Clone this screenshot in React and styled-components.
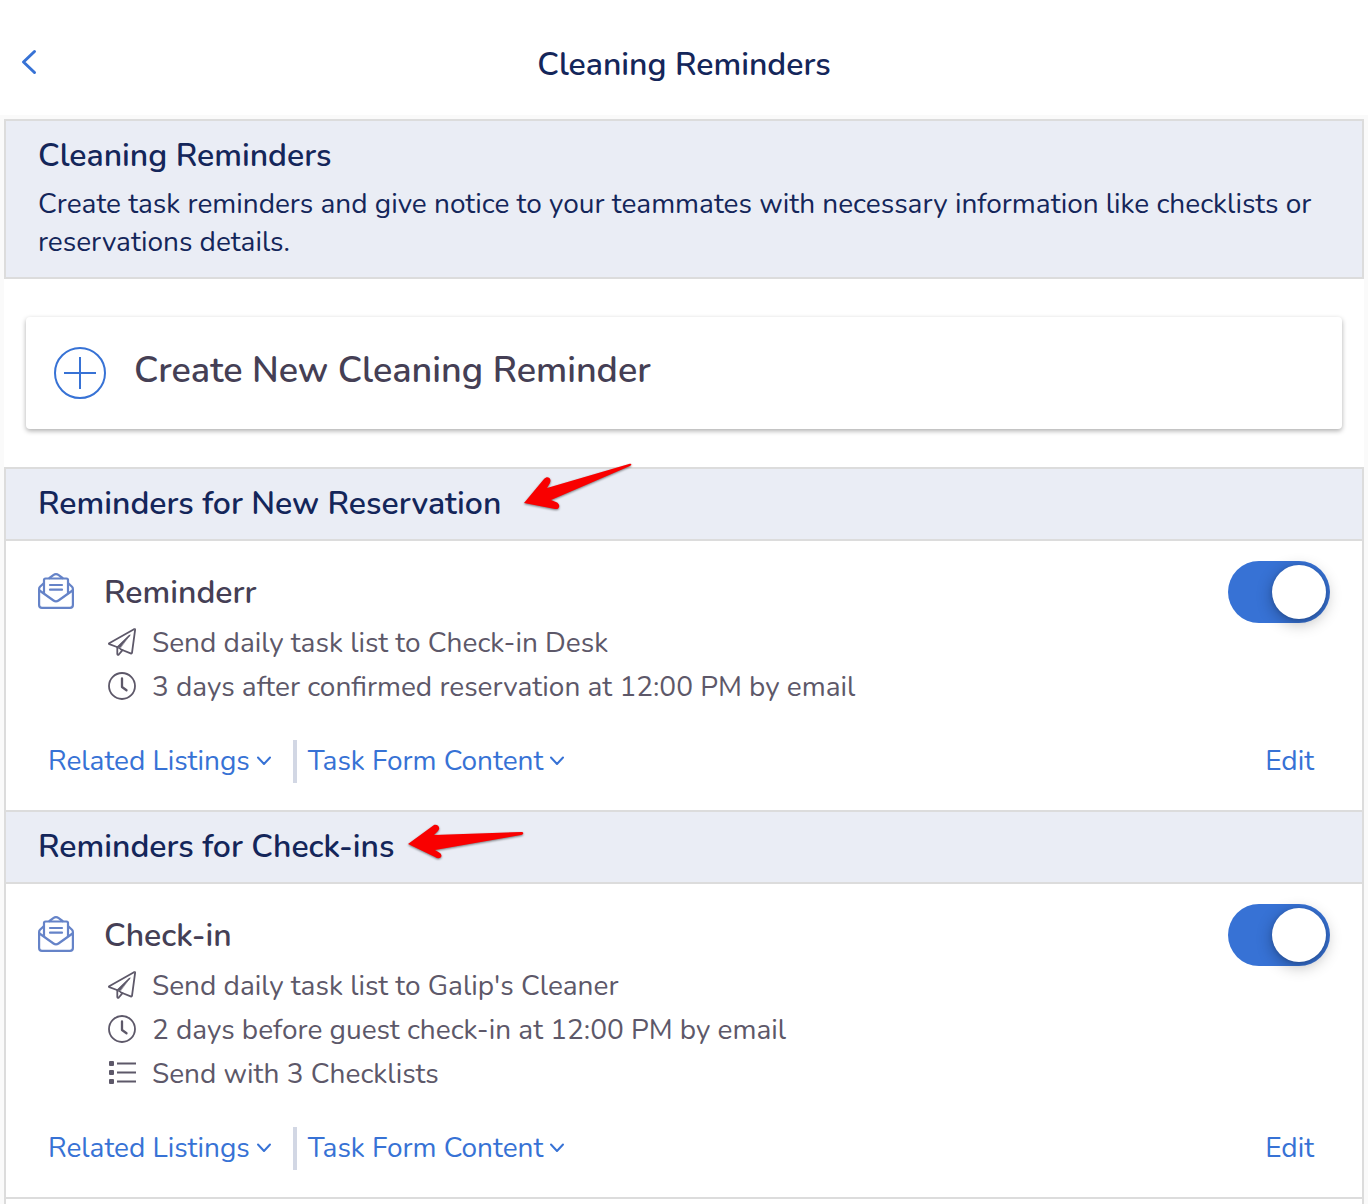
import { useState } from "react";
import styled, { createGlobalStyle } from "styled-components";

const GlobalStyle = createGlobalStyle`
  * {
    box-sizing: border-box;
  }
  body {
    margin: 0;
    background: #fafafa;
    color: #453f55;
    font-family: Nunito, Lato, "Open Sans", sans-serif;
    font-size: 28px;
  }
  button {
    font: inherit;
    border: none;
    padding: 0;
    cursor: pointer;
  }
  h1, h2, h3, p, ul {
    margin: 0;
    padding: 0;
    font-weight: 600;
  }
`;

const Page = styled.div`
  min-height: 100vh;
  display: flex;
  flex-direction: column;
`;

const TopBar = styled.header`
  display: grid;
  grid-template-columns: 60px 1fr 60px;
  align-items: center;
  height: 115px;
  padding-top: 14px;
  background: #fff;
`;

const BackButton = styled.button`
  display: flex;
  align-items: center;
  height: 44px;
  padding: 0 0 6px 20px;
  background: none;
  color: #3772d5;
`;

const PageTitle = styled.h1`
  color: #14265a;
  font-size: 32px;
  line-height: 44px;
  text-align: center;
`;

const Main = styled.main`
  flex: 1;
  display: flex;
  flex-direction: column;
  margin: 4px 4px 0;
  background: #fff;
`;

const Intro = styled.section`
  padding: 12px 32px 16px;
  background: #eaedf5;
  border: 2px solid #dcdcdc;
  color: #14265a;

  h2 {
    font-size: 32px;
    line-height: 46px;
    margin-bottom: 6px;
  }
  p {
    font-size: 28px;
    font-weight: 400;
    line-height: 38px;
  }
`;

const CreateButton = styled.button`
  display: flex;
  align-items: center;
  gap: 28px;
  height: 112px;
  margin: 38px 22px;
  padding: 0 28px;
  background: #fff;
  border-radius: 4px;
  box-shadow: 0 2px 5px rgba(0, 0, 0, 0.32);
  color: #453f55;
  font-size: 36px;
  font-weight: 600;

  span {
    padding-bottom: 6px;
  }
`;

const List = styled.div`
  flex: 1;
  border: solid #dcdcdc;
  border-width: 0 2px;
`;

const Group = styled.section`
  &:last-child {
    border-bottom: 2px solid #dcdcdc;
  }
`;

const GroupTitle = styled.h2`
  padding: 0 32px;
  background: #eaedf5;
  border: solid #dcdcdc;
  border-width: 2px 0;
  color: #14265a;
  font-size: 32px;
  line-height: 70px;

  span {
    position: relative;
  }
`;

/* pointer drawn over the heading, right after its text */
const Pointer = styled.svg`
  position: absolute;
  left: calc(100% + ${(p) => p.$gap}px);
  top: ${(p) => p.$top}px;
  filter: drop-shadow(0 1px 1px rgba(0, 0, 0, 0.5));
`;

const Item = styled.article`
  padding: 20px 32px 27px;
`;

const ItemHead = styled.div`
  display: grid;
  grid-template-columns: 36px 1fr auto;
  align-items: center;
  column-gap: 30px;

  h3 {
    padding-top: 2px;
    font-size: 32px;
    line-height: 44px;
  }
  > svg {
    margin-bottom: 2px;
  }
`;

const Details = styled.ul`
  padding: 0 0 0 70px;
  margin: -2px 0 31px;
  list-style: none;

  li {
    display: flex;
    align-items: center;
    gap: 16px;
    height: 44px;
    color: #5d5869;
    font-size: 28px;
    font-weight: 400;
  }
  svg {
    flex: none;
    margin-bottom: 2px;
  }
`;

const ItemFooter = styled.footer`
  display: flex;
  align-items: center;
  padding: 0 16px 0 10px;
`;

const LinkButton = styled.button`
  display: flex;
  align-items: center;
  gap: 6px;
  background: none;
  color: #3772d5;
  font-size: 28px;
  line-height: 43px;

  & + & {
    margin-left: 21px;
    padding-left: 11px;
    border-left: 4px solid #d2d7e4;
  }
  svg {
    margin-bottom: 2px;
  }
`;

const EditLink = styled.a`
  margin-left: auto;
  color: #3772d5;
  font-size: 28px;
  line-height: 43px;
  text-decoration: none;
`;

const Switch = styled.input`
  appearance: none;
  width: 102px;
  height: 62px;
  margin: 0;
  padding: 4px;
  border-radius: 31px;
  background: #c5cad6;
  cursor: pointer;

  &::before {
    content: "";
    display: block;
    width: 54px;
    height: 54px;
    border-radius: 50%;
    background: #fff;
    box-shadow: 0 4px 16px rgba(0, 0, 0, 0.3), 0 1px 4px rgba(0, 0, 0, 0.15);
  }
  &:checked {
    background: #3772d5;
  }
  &:checked::before {
    margin-left: 40px;
  }
`;

const BackIcon = () => (
  <svg width="18" height="26" viewBox="0 0 18 26" fill="none" stroke="currentColor" strokeWidth="3" strokeLinecap="round" strokeLinejoin="round">
    <path d="M14.500 2.500 3.500 13 14.500 23.500" />
  </svg>
);

const PlusIcon = () => (
  <svg width="52" height="52" viewBox="0 0 52 52" fill="none" stroke="#3772d5" strokeWidth="2">
    <circle cx="26" cy="26" r="25" />
    <path d="M10 26h32M26 10v32" />
  </svg>
);

const MailIcon = () => (
  <svg width="36" height="36" viewBox="0 0 36 36" fill="none" stroke="#6583c8" strokeWidth="2.200" strokeLinejoin="round" strokeLinecap="round">
    <path d="M6 10 2 13.800Q1.100 14.700 1.100 16V32q0 2.900 2.900 2.900h28q2.900 0 2.900-2.900V16q0-1.300-.9-2.200L30 10" />
    <path d="M1.500 17.500 15.500 27.500q2.500 1.800 5 0L34.500 17.500" />
    <path d="M6 20V7q0-1.500 1.500-1.500h21Q30 5.500 30 7v13" />
    <path d="M11.500 5 15.300 2.200q2.700-2 5.400 0L24.500 5M12 12h12M12 16.700h12" />
  </svg>
);

const SendIcon = () => (
  <svg width="28" height="28" viewBox="0 0 28 28" fill="none" stroke="#5d5869" strokeWidth="1.800" strokeLinejoin="round" strokeLinecap="round">
    <path d="M9 19 1.300 16.200q-.8-.4-.1-1L26 1.200q1.200-.5 1.100.7L24 24.800q-.3 1-1.300.6L13 21.500" />
    <path d="M9.300 19.500V26q.4 1.500 1.500.5l3.700-4.300" />
    <path d="M21.500 7.500 9.300 19.200l3.500 1.900" strokeWidth="1.500" />
    <path d="M22 7 10 18.500 12 20z" fill="#5d5869" strokeWidth=".5" />
  </svg>
);

const ClockIcon = () => (
  <svg width="28" height="28" viewBox="0 0 28 28" fill="none" stroke="#5d5869" strokeLinecap="round" strokeLinejoin="round">
    <circle cx="14" cy="14" r="13" strokeWidth="1.800" />
    <path d="M14 6.500V15l4.500 3.300" strokeWidth="2.300" />
  </svg>
);

const ListIcon = () => (
  <svg width="28" height="28" viewBox="0 0 28 28" fill="#5d5869">
    <rect x="1" y="2" width="5" height="5" rx="1" />
    <rect x="1" y="11" width="5" height="5" rx="1" />
    <rect x="1" y="20" width="5" height="5" rx="1" />
    <path d="M9 3.500h19v2H9zM9 12.500h19v2H9zM9 21.500h19v2H9z" />
  </svg>
);

const ChevronIcon = () => (
  <svg width="16" height="14" viewBox="0 0 16 14" fill="none" stroke="currentColor" strokeWidth="2" strokeLinecap="round" strokeLinejoin="round">
    <path d="M2 3.500 8 10l6-6.500" />
  </svg>
);

const SlantedPointer = () => (
  <Pointer $gap={23} $top={-19} width="110" height="48" viewBox="0 0 110 48" fill="#f90000">
    <path d="M0 40 20 16C24 12 28 16 26 20L23 25 105 1C108 0 108 2 106 3L27 37 32 39C37 41 36 47 31 46Z" />
  </Pointer>
);

const LevelPointer = () => (
  <Pointer $gap={13} $top={-1} width="116" height="36" viewBox="0 0 116 36" fill="#f90000">
    <path d="M0 20 26 1C30 0 33 4 30 7L26 11 113 8C116 8 116 10 113 11L27 26 32 29C36 33 31 36 27 33Z" />
  </Pointer>
);

const detailIcons = { send: SendIcon, clock: ClockIcon, list: ListIcon };

const groups = [
  {
    title: "Reminders for New Reservation",
    Arrow: SlantedPointer,
    name: "Reminderr",
    details: [
      ["send", "Send daily task list to Check-in Desk"],
      ["clock", "3 days after confirmed reservation at 12:00 PM by email"],
    ],
  },
  {
    title: "Reminders for Check-ins",
    Arrow: LevelPointer,
    name: "Check-in",
    details: [
      ["send", "Send daily task list to Galip's Cleaner"],
      ["clock", "2 days before guest check-in at 12:00 PM by email"],
      ["list", "Send with 3 Checklists"],
    ],
  },
];

function Reminder({ name, details }) {
  const [enabled, setEnabled] = useState(true);

  return (
    <Item>
      <ItemHead>
        <MailIcon />
        <h3>{name}</h3>
        <Switch
          type="checkbox"
          role="switch"
          aria-label={name}
          checked={enabled}
          onChange={() => setEnabled(!enabled)}
        />
      </ItemHead>
      <Details>
        {details.map(([icon, text]) => {
          const Icon = detailIcons[icon];
          return (
            <li key={text}>
              <Icon />
              {text}
            </li>
          );
        })}
      </Details>
      <ItemFooter>
        <LinkButton type="button">
          Related Listings <ChevronIcon />
        </LinkButton>
        <LinkButton type="button">
          Task Form Content <ChevronIcon />
        </LinkButton>
        <EditLink href="#edit">Edit</EditLink>
      </ItemFooter>
    </Item>
  );
}

export default function App() {
  return (
    <Page>
      <GlobalStyle />
      <TopBar>
        <BackButton type="button" aria-label="Back">
          <BackIcon />
        </BackButton>
        <PageTitle>Cleaning Reminders</PageTitle>
      </TopBar>
      <Main>
        <Intro>
          <h2>Cleaning Reminders</h2>
          <p>
            Create task reminders and give notice to your teammates with
            necessary information like checklists or reservations details.
          </p>
        </Intro>
        <CreateButton type="button">
          <PlusIcon />
          <span>Create New Cleaning Reminder</span>
        </CreateButton>
        <List>
          {groups.map(({ title, Arrow, name, details }) => (
            <Group key={title}>
              <GroupTitle>
                <span>
                  {title}
                  <Arrow />
                </span>
              </GroupTitle>
              <Reminder name={name} details={details} />
            </Group>
          ))}
        </List>
      </Main>
    </Page>
  );
}
